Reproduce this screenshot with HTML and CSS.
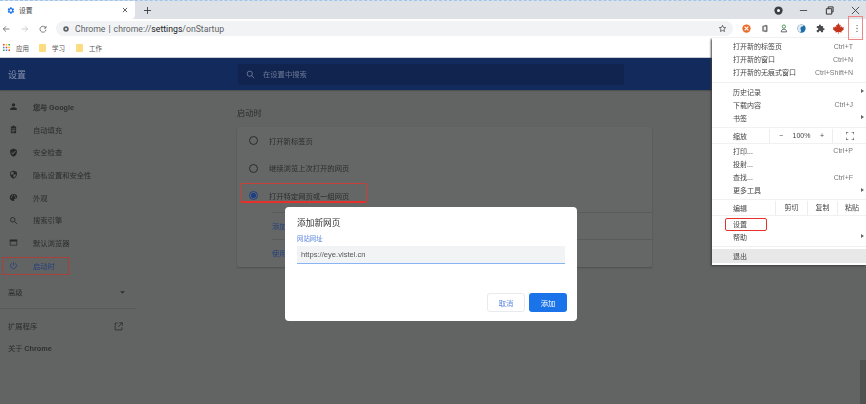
FILE: index.html
```html
<!DOCTYPE html>
<html lang="zh-CN">
<head>
<meta charset="utf-8">
<title>设置</title>
<link rel="stylesheet" href="styles.css">
</head>
<body>
<div class="window">
  <div class="tabstrip">
    <div class="tab">
      <svg class="tab-icon" viewBox="0 0 24 24"><path fill="#1a73e8" d="M19.400 13a7.500 7.500 0 0 0 0-2l2.100-1.600-2-3.500-2.500 1a7.500 7.500 0 0 0-1.700-1L15 3.300h-4l-.4 2.600a7.500 7.500 0 0 0-1.700 1l-2.500-1-2 3.500L6.500 11a7.500 7.500 0 0 0 0 2l-2.100 1.600 2 3.500 2.500-1a7.500 7.500 0 0 0 1.700 1l.4 2.600h4l.4-2.600a7.500 7.500 0 0 0 1.700-1l2.500 1 2-3.500zM13 15.500a3.500 3.500 0 1 1 0-7 3.500 3.500 0 0 1 0 7z"/></svg>
      <span class="tab-title">设置</span>
      <svg class="tab-close" viewBox="0 0 10 10"><path d="M1.500 1.500l7 7m0-7l-7 7" stroke="#444" stroke-width="1.400"/></svg>
    </div>
    <svg class="new-tab" viewBox="0 0 10 10"><path d="M5 0v10M0 5h10" stroke="#333" stroke-width="1.200"/></svg>
    <div class="strip-space"></div>
    <div class="win-buttons">
      <svg class="win-profile" viewBox="0 0 12 12"><circle cx="6" cy="6" r="5.500" fill="#3c4043"/><circle cx="6" cy="6" r="2" fill="#fff"/></svg>
      <svg class="win-btn" viewBox="0 0 10 10"><path d="M1 5h8" stroke="#444"/></svg>
      <svg class="win-btn" viewBox="0 0 10 10"><path d="M1.500 3h6v6h-6zM3.500 3V1h5.500v5.500H7.500" fill="none" stroke="#333" stroke-width="1.100"/></svg>
      <svg class="win-btn" viewBox="0 0 10 10"><path d="M1 1l8 8m0-8l-8 8" stroke="#444"/></svg>
    </div>
  </div>

  <div class="toolbar">
    <svg class="nav" viewBox="0 0 12 12"><path d="M11 6H2M6 2L2 6l4 4" fill="none" stroke="#5f6368" stroke-width="1.200"/></svg>
    <svg class="nav" viewBox="0 0 12 12"><path d="M1 6h9M6 2l4 4-4 4" fill="none" stroke="#bdc1c6" stroke-width="1.200"/></svg>
    <svg class="nav" viewBox="0 0 12 12"><path d="M10 4.200A4.500 4.500 0 1 0 10.500 7M10.500 1.500v3.200H7.300" fill="none" stroke="#5f6368" stroke-width="1.200"/></svg>
    <div class="omnibox">
      <svg class="omni-icon" viewBox="0 0 12 12"><circle cx="6" cy="6" r="5.500" fill="#5f6368"/><circle cx="6" cy="6" r="2" fill="#f1f3f4"/></svg>
      <span class="omni-origin">Chrome</span><span class="omni-bar">|</span>
      <span class="omni-url">chrome://<b>settings</b>/onStartup</span>
      <svg class="omni-star" viewBox="0 0 24 24"><path d="M12 3.500l2.600 5.600 6 .7-4.500 4.100 1.200 6L12 17l-5.300 2.900 1.200-6-4.500-4.100 6-.7z" fill="none" stroke="#444" stroke-width="2"/></svg>
    </div>
    <div class="extensions">
      <svg class="ext" viewBox="0 0 12 12"><circle cx="6" cy="6" r="5.500" fill="#ec6a28"/><path d="M3.500 3.500l5 5m0-5l-5 5" stroke="#fff" stroke-width="1.600"/></svg>
      <svg class="ext" viewBox="0 0 12 12"><path d="M3 2.500L8 1l2 1v8l-2 1-5-1.500z" fill="#777"/><path d="M5 3.500h3v5H5z" fill="#eee"/></svg>
      <svg class="ext" viewBox="0 0 12 12"><circle cx="6.500" cy="3.500" r="2.200" fill="none" stroke="#3a8f4a" stroke-width="1.200"/><path d="M3 10.500c0-3 2-3.500 3.500-3.500S10 7.500 10 10.500z" fill="none" stroke="#555" stroke-width="1.200"/></svg>
      <svg class="ext" viewBox="0 0 12 12"><circle cx="6" cy="6" r="5.500" fill="#1c6fa8"/><path d="M6 .5a5.500 5.500 0 0 0-3 10c2 .5 3-1 2-3S5 3 8 3L9 1.500A5 5 0 0 0 6 .5z" fill="#dfe8ee"/></svg>
      <svg class="ext" viewBox="0 0 24 24"><path fill="#4a4d50" d="M20.500 11H19V7a2 2 0 0 0-2-2h-4V3.500a2.500 2.500 0 0 0-5 0V5H4a2 2 0 0 0-2 2v3.800h1.500a2.700 2.700 0 0 1 0 5.400H2V20a2 2 0 0 0 2 2h3.800v-1.500a2.700 2.700 0 0 1 5.400 0V22H17a2 2 0 0 0 2-2v-4h1.500a2.500 2.500 0 0 0 0-5z"/></svg>
      <svg class="ext ext-leaf" viewBox="0 0 12 12"><path fill="#c4331b" d="M6 0l1.400 2.600 1.100-.6-.5 3 1.500-1.400.5 1.200 1.900-.3-.6 1.900.7.500-2.900 2.300.3 1.100L6.300 9.800v2.200h-.6V9.800l-3.100.5.300-1.100L-.3 6.900l.7-.5-.6-1.900 1.900.3.500-1.200L3.700 5l-.5-3 1.100.6z"/></svg>
    </div>
    <svg class="more" viewBox="0 0 4 14"><circle cx="2" cy="2.500" r="1" fill="#5f6368"/><circle cx="2" cy="7" r="1" fill="#5f6368"/><circle cx="2" cy="11.500" r="1" fill="#5f6368"/></svg>
  </div>

  <div class="bookmarks">
    <svg class="apps" viewBox="0 0 9 9">
      <path fill="#ea4335" d="M0 0h2v2H0z"/><path fill="#fbbc04" d="M3.500 0h2v2h-2z"/><path fill="#34a853" d="M7 0h2v2H7z"/>
      <path fill="#4285f4" d="M0 3.500h2v2H0z"/><path fill="#ea4335" d="M3.500 3.500h2v2h-2z"/><path fill="#fbbc04" d="M7 3.500h2v2H7z"/>
      <path fill="#34a853" d="M0 7h2v2H0z"/><path fill="#4285f4" d="M3.500 7h2v2h-2z"/><path fill="#ea4335" d="M7 7h2v2H7z"/>
    </svg>
    <span class="bm-text bm-apps">应用</span>
    <span class="bm-folder"></span><span class="bm-text bm-study">学习</span>
    <span class="bm-folder"></span><span class="bm-text">工作</span>
  </div>

  <header class="settings-head">
    <span class="head-title">设置</span>
    <div class="search">
      <svg class="search-icon" viewBox="0 0 12 12"><circle cx="5" cy="5" r="3.500" fill="none" stroke="#6d7a97" stroke-width="1.200"/><path d="M7.500 7.500L11 11" stroke="#6d7a97" stroke-width="1.200"/></svg>
      <span class="search-text">在设置中搜索</span>
    </div>
  </header>

  <div class="settings-body">
    <nav class="sidebar">
      <div class="side-group">
        <a class="side-item"><svg class="side-icon" viewBox="0 0 24 24"><path d="M12 12a4.500 4.500 0 1 0 0-9 4.500 4.500 0 0 0 0 9zm0 2c-3.500 0-9 1.700-9 5v2h18v-2c0-3.300-5.500-5-9-5z"/></svg><span class="side-bold">您与 Google</span></a>
        <a class="side-item"><svg class="side-icon" viewBox="0 0 24 24"><path fill-rule="evenodd" d="M19 4h-4a3 3 0 0 0-6 0H5v18h14zM7 9h10v2H7zm0 4h10v2H7zm0 4h7v2H7z"/></svg><span>自动填充</span></a>
        <a class="side-item"><svg class="side-icon" viewBox="0 0 24 24"><path fill-rule="evenodd" d="M12 1.500L3 5v6c0 5.500 3.800 10.500 9 12 5.200-1.500 9-6.500 9-12V5zM10 17l-4-4 1.500-1.500L10 14l6.500-6.500L18 9z"/></svg><span>安全检查</span></a>
        <a class="side-item"><svg class="side-icon" viewBox="0 0 24 24"><path fill-rule="evenodd" d="M12 1.500L3 5v6c0 5.500 3.800 10.500 9 12 5.200-1.500 9-6.500 9-12V5zm0 2.200V12H5V6.500zM12 12h7c-.5 4-3.300 7.600-7 8.800z"/></svg><span>隐私设置和安全性</span></a>
        <a class="side-item"><svg class="side-icon" viewBox="0 0 24 24"><path fill-rule="evenodd" d="M12 2.500C6.500 2.500 2 6.800 2 12s4.500 9.500 10 9.500c1.500 0 2.500-1 2.500-2.300 0-1.400-1-1.700-1-2.700s.8-1.500 1.800-1.500H17c2.800 0 5-2.200 5-5 0-4.300-4.500-7.500-10-7.500zM6.500 12.500a1.500 1.500 0 1 1 0-3 1.500 1.500 0 0 1 0 3zm3-4a1.500 1.500 0 1 1 0-3 1.500 1.500 0 0 1 0 3zm5 0a1.500 1.500 0 1 1 0-3 1.500 1.500 0 0 1 0 3zm3 4a1.500 1.500 0 1 1 0-3 1.500 1.500 0 0 1 0 3z"/></svg><span>外观</span></a>
        <a class="side-item"><svg class="side-icon" viewBox="0 0 24 24"><path fill="none" stroke="#262829" stroke-width="2.400" d="M10 16a6 6 0 1 0 0-12 6 6 0 0 0 0 12zm4.500-1.500L21 21"/></svg><span>搜索引擎</span></a>
        <a class="side-item"><svg class="side-icon" viewBox="0 0 24 24"><path fill-rule="evenodd" d="M2 4h20v16H2zm2 5v9h16V9z"/></svg><span>默认浏览器</span></a>
        <a class="side-item side-active"><svg class="side-icon" viewBox="0 0 24 24"><path fill="none" stroke="#24407c" stroke-width="2.200" d="M12 3v9M7 6a8 8 0 1 0 10 0"/></svg><span>启动时</span></a>
      </div>
      <div class="side-advanced"><span>高级</span><svg class="adv-arrow" viewBox="0 0 8 4"><path d="M0 0h8L4 4z" fill="#2f3132"/></svg></div>
      <div class="side-rule"></div>
      <div class="side-ext"><span>扩展程序</span><svg class="ext-open" viewBox="0 0 12 12"><path d="M5 1.500H1.500v9h9V7M7 1h4v4M11 1L5.500 6.500" fill="none" stroke="#2a2c2d" stroke-width="1.100"/></svg></div>
      <div class="side-about"><span>关于 </span><span class="side-bold">Chrome</span></div>
    </nav>
    <main class="content">
      <h2 class="section-title">启动时</h2>
      <section class="card">
        <div class="radio-row"><span class="radio"></span><span>打开新标签页</span></div>
        <div class="radio-row"><span class="radio"></span><span>继续浏览上次打开的网页</span></div>
        <div class="radio-row"><span class="radio radio-on"></span><span>打开特定网页或一组网页</span></div>
        <div class="link-row">添加</div>
        <div class="link-row">使用</div>
      </section>
    </main>
    <div class="scroll-thumb"></div>
  </div>
</div>

<div class="dialog">
  <h3 class="dialog-title">添加新网页</h3>
  <label class="field-label">网站网址</label>
  <div class="field">https://eye.vistel.cn</div>
  <div class="dialog-actions">
    <button class="btn btn-cancel">取消</button>
    <button class="btn btn-add">添加</button>
  </div>
</div>

<div class="menu">
  <div class="menu-group">
    <div class="menu-row"><span>打开新的标签页</span><kbd>Ctrl+T</kbd></div>
    <div class="menu-row"><span>打开新的窗口</span><kbd>Ctrl+N</kbd></div>
    <div class="menu-row"><span>打开新的无痕式窗口</span><kbd>Ctrl+Shift+N</kbd></div>
  </div>
  <div class="menu-group">
    <div class="menu-row has-sub"><span>历史记录</span></div>
    <div class="menu-row"><span>下载内容</span><kbd>Ctrl+J</kbd></div>
    <div class="menu-row has-sub"><span>书签</span></div>
  </div>
  <div class="menu-cells">
    <span>缩放</span>
    <div class="zoom-cell"><span>−</span><span>100%</span><span>+</span></div>
    <div class="full-cell"><svg viewBox="0 0 10 10"><path d="M0 3V0h3M7 0h3v3M10 7v3H7M3 10H0V7" fill="none" stroke="#222" stroke-width="1.100"/></svg></div>
  </div>
  <div class="menu-group">
    <div class="menu-row"><span>打印...</span><kbd>Ctrl+P</kbd></div>
    <div class="menu-row"><span>投射...</span></div>
    <div class="menu-row"><span>查找...</span><kbd>Ctrl+F</kbd></div>
    <div class="menu-row has-sub"><span>更多工具</span></div>
  </div>
  <div class="menu-cells menu-cells-edit">
    <span>编辑</span>
    <span class="edit-cell">剪切</span><span class="edit-cell">复制</span><span class="edit-cell">粘贴</span>
  </div>
  <div class="menu-group">
    <div class="menu-row"><span>设置</span></div>
    <div class="menu-row has-sub"><span>帮助</span></div>
  </div>
  <div class="menu-group menu-last">
    <div class="menu-row menu-hover"><span>退出</span></div>
  </div>
</div>

<div class="mark mark-more"></div>
<div class="mark mark-settings"></div>
<div class="mark mark-side"></div>
<div class="mark mark-radio"></div>
</body>
</html>
```
FILE: styles.css
```css
* { box-sizing: border-box; }
html, body { margin: 0; width: 866px; height: 404px; overflow: hidden; }
body {
  position: relative;
  font-family: "Noto Sans CJK SC", "Liberation Sans", sans-serif;
  font-size: 7.300px;
  color: #333;
  background: #626463;
}
.window { display: flex; flex-direction: column; height: 404px; filter: blur(.35px); }
svg { display: block; flex: none; }

/* tab strip */
.tabstrip { display: flex; align-items: center; height: 19px; background: #dee1e6; border-top: 1px dashed #9cc6ee; }
.tab { display: flex; align-items: center; width: 135px; height: 18px; background: #fff; border-radius: 0 0 4px 0; padding: 0 0 0 6px; }
.tab-icon { width: 9px; height: 9px; }
.tab-title { margin-left: 4px; font-size: 6.800px; color: #444; }
.tab-close { width: 6px; height: 6px; margin-left: auto; margin-right: 7px; }
.new-tab { width: 7px; height: 7px; margin-left: 9px; }
.strip-space { flex: 1; }
.win-buttons { display: flex; align-items: center; gap: 16.600px; padding-right: 6.500px; }
.win-profile { width: 9px; height: 9px; }
.win-btn { width: 9px; height: 9px; }

/* toolbar */
.toolbar { display: flex; align-items: center; height: 19px; background: #fff; padding-left: 2px; }
.nav { width: 8px; height: 8px; margin-right: 11px; }
.nav + .nav + .nav { margin-right: 9px; margin-left: -1px; }
.omnibox { display: flex; align-items: center; width: 677px; height: 15px; padding: 0 6px 0 7px; background: #f1f3f4; border-radius: 8px; font-family: "Roboto", sans-serif; font-size: 8.700px; color: #5f6368; }
.omni-icon { width: 6px; height: 6px; margin-right: 6px; }
.omni-bar { margin: 0 3px 0 3px; color: #555; }
.omni-url b { font-weight: 400; color: #202124; }
.omni-star { width: 9px; height: 9px; margin-left: auto; }
.extensions { display: flex; align-items: center; gap: 9.500px; margin-left: 8.500px; }
.ext { width: 9px; height: 9px; }
.ext-leaf { width: 11px; height: 11px; margin: 0 -1px; }
.more { width: 4px; height: 9px; margin-left: 11.500px; }

/* bookmarks */
.bookmarks { display: flex; align-items: center; height: 20px; background: #fff; border-bottom: 1px solid #c8ccd2; padding-left: 3px; }
.apps { width: 7px; height: 7px; }
.bm-text { font-size: 6.500px; color: #555; }
.bm-apps { margin-left: 6px; margin-right: 10px; }
.bm-study { margin-right: 11px; }
.bm-folder { width: 7px; height: 8px; margin-right: 6px; background: #fbdc80; border-radius: 1px; }

/* settings header */
.settings-head { display: flex; align-items: center; height: 32px; background: #132a5c; box-shadow: 0 1px 1px #4f5151; position: relative; padding-left: 8px; }
.head-title { width: 230px; font-size: 9px; color: #8491ab; }
.search { display: flex; align-items: center; width: 386px; height: 21px; background: #10244f; border-radius: 2px; padding-left: 8px; }
.search-icon { width: 9px; height: 9px; }
.search-text { margin-left: 8px; font-size: 7.300px; color: #6d7a97; }

/* settings body */
.settings-body { flex: 1; display: flex; position: relative; color: #2a2c2d; }
.sidebar { width: 136px; flex: none; display: flex; flex-direction: column; }
.side-group { padding-top: 5.500px; }
.side-item { display: flex; align-items: center; height: 22.700px; padding-left: 9px; }
.side-icon { width: 9px; height: 9px; margin-right: 15px; fill: #262829; }
.side-bold { font-family: "Liberation Sans", sans-serif; font-weight: 700; color: #2f3132; }
.side-active { color: #24407c; }
.side-advanced { display: flex; align-items: center; justify-content: space-between; height: 22px; margin-top: 4px; padding: 0 11px 0 8px; }
.adv-arrow { width: 5px; height: 3px; }
.side-rule { height: 1px; margin-top: 5px; background: #585a5a; }
.side-ext { display: flex; align-items: center; justify-content: space-between; height: 22px; margin-top: 6px; padding: 0 13px 0 8px; }
.ext-open { width: 9px; height: 9px; }
.side-about { height: 22px; margin-top: 1px; padding: 5px 0 0 8px; }

.content { width: 415px; margin-left: 101px; flex: none; }
.section-title { margin: 16px 0 0; height: 21px; font-size: 8.200px; font-weight: 400; line-height: 12px; color: #2a2c2d; }
.card { height: 140px; background: #656766; border-radius: 2px; box-shadow: 0 1px 2px #4d4f4f; }
.radio-row { display: flex; align-items: center; height: 27.500px; padding-left: 12px; }
.radio { width: 9px; height: 9px; margin-right: 11.500px; margin-left: -.5px; border: 1px solid #2a2c2d; border-radius: 50%; }
.radio-on { border-color: #1c3f86; background: radial-gradient(circle, #1c3f86 0 2.400px, transparent 2.900px); }
.link-row { height: 27px; margin-left: 35px; border-top: 1px solid #5a5c5c; line-height: 27px; color: #24407c; }
.radio-row + .link-row { margin-top: 2.500px; }
.scroll-thumb { position: absolute; right: 0; bottom: 0; width: 6px; height: 44px; background: #505252; }

/* dialog */
.dialog { position: absolute; left: 285px; top: 207px; width: 292px; height: 114px; background: #fff; border-radius: 4px; padding: 9px 10px 0 12px; display: flex; flex-direction: column; filter: blur(.35px); }
.dialog-title { margin: 0; height: 13px; font-size: 8.700px; line-height: 13px; font-weight: 400; color: #333; }
.field-label { margin-top: 5px; height: 9px; font-size: 6.400px; line-height: 9px; color: #5a86e0; }
.field { width: 268px; height: 18px; margin-top: 3px; padding-left: 4px; background: #f1f3f4; border-bottom: 1.500px solid #8ab4f8; font-family: "Liberation Sans", sans-serif; font-size: 7.600px; line-height: 17px; color: #555; }
.dialog-actions { display: flex; justify-content: flex-end; gap: 4px; margin-top: 29px; }
.btn { width: 38px; height: 19px; padding: 0; border-radius: 3px; font: inherit; font-size: 7.300px; }
.btn-cancel { background: #fff; border: 1px solid #e8eaed; color: #5a86e0; }
.btn-add { background: #1a73e8; border: 0; color: #fff; }

/* chrome menu */
.menu { position: absolute; left: 712px; top: 38px; width: 154px; height: 227px; background: #fff; box-shadow: -1px 1px 2px #3c3d3d; font-size: 7px; color: #444; filter: blur(.35px); padding-top: 1.500px; }
.menu-group { border-bottom: 1.500px solid #f1f1f1; padding: 0 0 2.500px; margin-bottom: 2.500px; }
.menu-row { display: flex; align-items: center; justify-content: space-between; height: 13.200px; padding: 0 13px 0 21px; position: relative; }
.menu-row kbd { font-family: "Liberation Sans", sans-serif; font-size: 7px; color: #777; }
.has-sub::after { content: ""; position: absolute; right: 2px; top: 4px; border-left: 3px solid #666; border-top: 2.500px solid transparent; border-bottom: 2.500px solid transparent; }
.menu-cells { display: grid; grid-template-columns: 36px 64px 33px; align-items: center; height: 15px; margin: -2px 0 .6px; padding-left: 21px; border-bottom: 1.500px solid #f1f1f1; }
.zoom-cell { display: flex; justify-content: space-between; align-items: center; height: 100%; padding: 0 8px 0 9px; border-left: 1px solid #eee; border-right: 1px solid #eee; font-family: "Liberation Sans", sans-serif; }
.full-cell { display: flex; justify-content: center; align-items: center; }
.full-cell svg { width: 8px; height: 8px; }
.menu-cells-edit { grid-template-columns: 42px 32px 30px 1fr; margin-bottom: 1px; }
.edit-cell { height: 100%; line-height: 13px; text-align: center; border-left: 1px solid #eee; }
.menu-last { border: 0; margin: 0; padding: 0; }
.menu-hover { background: #e8e8e8; height: 13.500px; }

/* red annotations */
.mark { position: absolute; border: 1px solid #e8302a; }
.mark-more { left: 848px; top: 16px; width: 15px; height: 24px; border-color: #e88; }
.mark-settings { left: 725px; top: 218px; width: 42px; height: 13px; border-radius: 2px; }
.mark-side { left: 2px; top: 257px; width: 67px; height: 18px; border-color: #a8403c; }
.mark-radio { left: 240px; top: 183px; width: 127px; height: 20px; border-color: #c8403a; border-bottom: 2px solid #e8302a; border-radius: 2px; }
```
